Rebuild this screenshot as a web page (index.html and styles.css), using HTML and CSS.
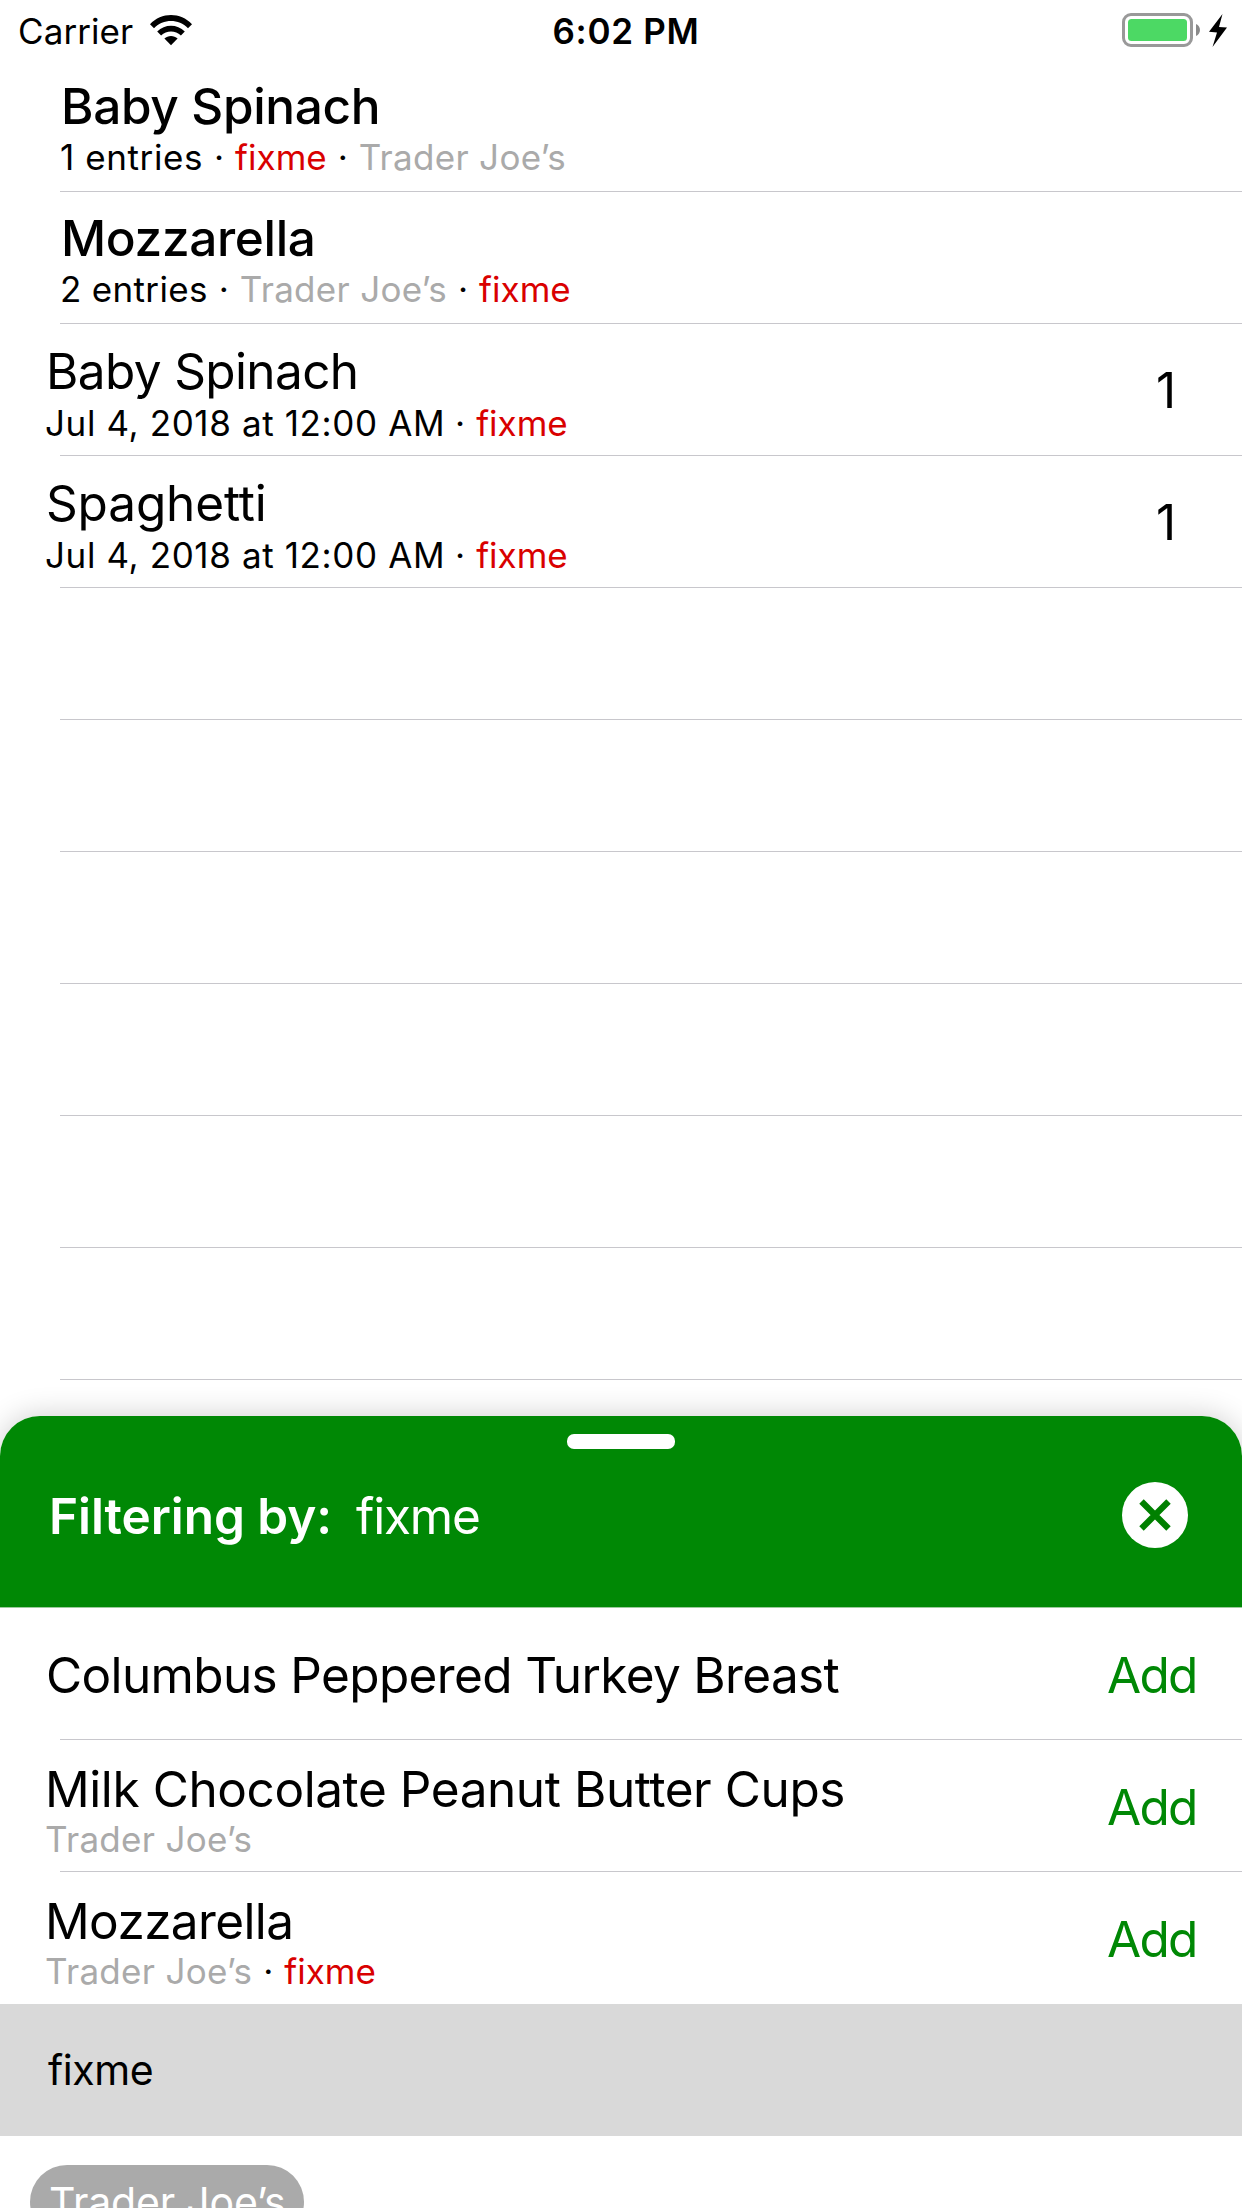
FILE: index.html
```html
<!DOCTYPE html>
<html lang="en">
<head>
<meta charset="utf-8">
<title>Pantry</title>
<link rel="stylesheet" href="styles.css">
</head>
<body>
<div class="screen">
  <header class="status">
    <div class="status-left">
      <span class="carrier">Carrier</span>
      <svg class="wifi" width="42" height="31" viewBox="0 0 42 31">
        <path d="M0 9.2C11.5-3 30.500-3 42 9.200L38 13.200C28.700 3.700 13.300 3.700 4 13.200Z"/>
        <path d="M7.200 16.500C14.800 8.800 27.200 8.800 34.800 16.500L30.900 20.500C25.500 15 16.500 15 11.100 20.500Z"/>
        <path d="M14.400 23.500C18 20 24 20 27.600 23.500L21 30.200Z"/>
      </svg>
    </div>
    <span class="time">6:02 PM</span>
    <div class="status-right">
      <svg width="106" height="36" viewBox="0 0 106 36">
        <rect x="1.500" y="1.500" width="68" height="31" rx="7.500" fill="#fff" stroke="#999" stroke-width="3"/>
        <rect x="6" y="6" width="59" height="22" rx="3.500" fill="#4cd964"/>
        <path d="M74 11C79.300 13 79.300 21 74 23Z" fill="#8a8a8a"/>
        <path d="M100.500 1L87 18.700L95 19.500L90.500 34L105 14.500L97 14Z"/>
      </svg>
    </div>
  </header>

  <main class="list">
    <div class="row group">
      <div class="title">Baby Spinach</div>
      <div class="sub"><span class="one">1 entries</span><i>·</i><span class="fixme">fixme</span><i>·</i><span class="store">Trader Joe’s</span></div>
    </div>
    <div class="row group">
      <div class="title">Mozzarella</div>
      <div class="sub"><span class="two">2 entries</span><i>·</i><span class="store">Trader Joe’s</span><i>·</i><span class="fixme">fixme</span></div>
    </div>
    <div class="row entry">
      <div class="text">
        <div class="title tight">Baby Spinach</div>
        <div class="sub"><span class="date">Jul 4, 2018 at 12:00 AM</span><i>·</i><span class="fixme">fixme</span></div>
      </div>
      <div class="count">1</div>
    </div>
    <div class="row entry">
      <div class="text">
        <div class="title loose">Spaghetti</div>
        <div class="sub"><span class="date">Jul 4, 2018 at 12:00 AM</span><i>·</i><span class="fixme">fixme</span></div>
      </div>
      <div class="count">1</div>
    </div>
    <div class="row"></div>
    <div class="row"></div>
    <div class="row"></div>
    <div class="row"></div>
    <div class="row"></div>
    <div class="row"></div>
  </main>

  <section class="drawer">
    <div class="drawer-head">
      <div class="handle"></div>
      <div class="filter">
        <span class="filter-label">Filtering by:</span>
        <span class="filter-value">fixme</span>
        <svg class="close" width="66" height="66" viewBox="0 0 66 66">
          <circle cx="33" cy="33" r="33" fill="#fff"/>
          <path d="M19.500 19.500L46.500 46.500M46.500 19.500L19.500 46.500" stroke="#008000" stroke-width="6.300"/>
        </svg>
      </div>
    </div>
    <div class="row item">
      <div class="text"><div class="title wide">Columbus Peppered Turkey Breast</div></div>
      <div class="add">Add</div>
    </div>
    <div class="row item">
      <div class="text">
        <div class="title">Milk Chocolate Peanut Butter Cups</div>
        <div class="sub"><span class="store">Trader Joe’s</span></div>
      </div>
      <div class="add">Add</div>
    </div>
    <div class="row item last">
      <div class="text">
        <div class="title tight">Mozzarella</div>
        <div class="sub"><span class="store">Trader Joe’s</span><i>·</i><span class="fixme">fixme</span></div>
      </div>
      <div class="add">Add</div>
    </div>
    <div class="field">fixme</div>
    <div class="tags"><span class="tag">Trader Joe’s</span></div>
  </section>
</div>
</body>
</html>
```
FILE: styles.css
```css
* { box-sizing: border-box; }
body {
  margin: 0;
  background: #fff;
  color: #000;
  font-family: Inter, "Liberation Sans", sans-serif;
}
.screen {
  width: 1242px;
  height: 2208px;
  overflow: hidden;
  display: flex;
  flex-direction: column;
}
.status {
  flex: none;
  height: 60px;
  display: grid;
  grid-template-columns: 1fr auto 1fr;
  font-size: 35px;
  line-height: 62px;
  white-space: nowrap;
}
.status-left { display: flex; align-items: flex-start; padding-left: 18px; }
.carrier { letter-spacing: 0.08px; }
.wifi { margin: 15px 0 0 17px; }
.time { padding-left: 10px; font-weight: 600; letter-spacing: 0.7px; }
.status-right { display: flex; justify-content: flex-end; padding: 13px 14px 0 0; }

.list { flex: none; height: 1356px; }
.row {
  height: 132px;
  background: linear-gradient(#c8c7cc, #c8c7cc) 60px 131px / 1182px 1px no-repeat;
  white-space: nowrap;
}
.row.last { background: none; }
.title { font-size: 49.5px; line-height: 60px; letter-spacing: -0.42px; }
.title.wide { letter-spacing: -0.64px; }
.title.tight { letter-spacing: -0.62px; }
.title.loose { letter-spacing: -0.15px; }
.sub { display: flex; font-size: 35px; line-height: 42px; }
.sub i { width: 32px; text-align: center; font-style: normal; }
.group { padding: 16px 0 0 60px; }
.group .title { padding-left: 1px; font-weight: 500; letter-spacing: -0.34px; }
.one { letter-spacing: 0.6px; }
.two { letter-spacing: 0.33px; }
.date { letter-spacing: 0.62px; margin-right: -1px; }
.store { letter-spacing: 0.3px; color: #aaa; }
.fixme { color: #d90000; }

.entry, .item { display: flex; padding-left: 45px; }
.text { flex: 1; }
.entry .title { padding-left: 1px; }
.entry .text { padding-top: 17px; }
.entry .sub { margin-top: 1px; }
.count { width: 86px; line-height: 132px; font-size: 49.5px; }

.drawer {
  flex: none;
  height: 792px;
  background: #fff;
  border-radius: 40px 40px 0 0;
  box-shadow: 0 0 30px rgba(0, 0, 0, 0.2);
}
.drawer-head {
  height: 192px;
  padding-top: 18px;
  background: #008805;
  border-bottom: 1px solid #9bcb9c;
  border-radius: 40px 40px 0 0;
  color: #fff;
}
.handle { width: 108px; height: 15px; margin: 0 auto 33px; border-radius: 7px; background: #fff; }
.filter {
  display: flex;
  height: 66px;
  padding: 0 54px 0 49px;
  font-size: 49.5px;
  line-height: 68px;
  white-space: nowrap;
}
.filter-label { width: 307px; font-weight: 600; letter-spacing: -0.05px; }
.filter-value { flex: 1; letter-spacing: -1.17px; }
.item .text { padding-top: 19px; }
.item .sub { margin-top: -1px; }
.item .title.wide { padding: 18px 0 0 1px; }
.add { width: 135px; font-size: 49.5px; line-height: 134px; letter-spacing: -1.73px; color: #008805; }
.field {
  height: 132px;
  padding-left: 48px;
  background: #d9d9d9;
  font-size: 41px;
  line-height: 132px;
  letter-spacing: -0.4px;
}
.tags { height: 72px; padding: 29px 30px 0; overflow: hidden; }
.tag {
  display: block;
  width: 274px;
  height: 74px;
  padding-left: 19px;
  border-radius: 37px;
  background: #aaa;
  color: #fff;
  font-size: 41px;
  line-height: 74px;
  letter-spacing: -0.18px;
  white-space: nowrap;
}
```
